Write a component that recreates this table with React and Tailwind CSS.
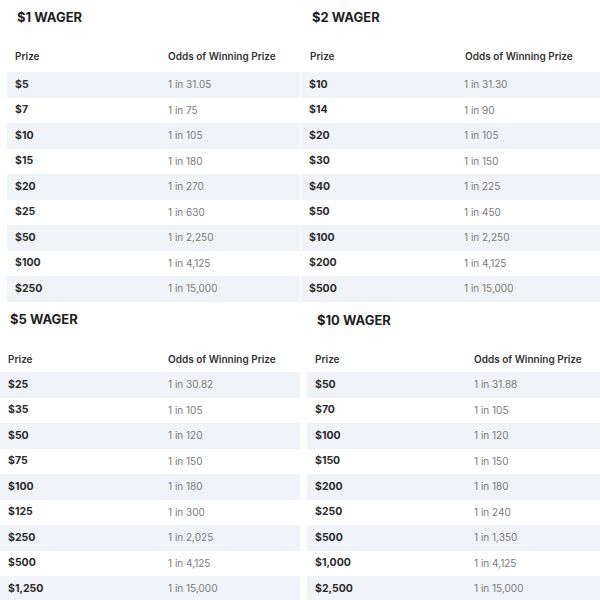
import React from "react";

const tables = [
  {
    title: "$1 WAGER",
    rows: [["$5","1 in 31.05"],["$7","1 in 75"],["$10","1 in 105"],["$15","1 in 180"],["$20","1 in 270"],["$25","1 in 630"],["$50","1 in 2,250"],["$100","1 in 4,125"],["$250","1 in 15,000"]],
  },
  {
    title: "$2 WAGER",
    rows: [["$10","1 in 31.30"],["$14","1 in 90"],["$20","1 in 105"],["$30","1 in 150"],["$40","1 in 225"],["$50","1 in 450"],["$100","1 in 2,250"],["$200","1 in 4,125"],["$500","1 in 15,000"]],
  },
  {
    title: "$5 WAGER",
    rows: [["$25","1 in 30.82"],["$35","1 in 105"],["$50","1 in 120"],["$75","1 in 150"],["$100","1 in 180"],["$125","1 in 300"],["$250","1 in 2,025"],["$500","1 in 4,125"],["$1,250","1 in 15,000"]],
  },
  {
    title: "$10 WAGER",
    rows: [["$50","1 in 31.88"],["$70","1 in 105"],["$100","1 in 120"],["$150","1 in 150"],["$200","1 in 180"],["$250","1 in 240"],["$500","1 in 1,350"],["$1,000","1 in 4,125"],["$2,500","1 in 15,000"]],
  },
];

function Table({ t, outer, titleCls, headCls, oddsCol }) {
  return (
    <div className={outer}>
      <div className={titleCls}>{t.title}</div>
      <div className={headCls}>
        <div className={oddsCol}>Prize</div>
        <div>Odds of Winning Prize</div>
      </div>
      <div className="flex flex-col">
        {t.rows.map((r, i) => (
          <div key={i} className={"flex items-center h-[25.5px] pl-2 " + (i % 2 === 0 ? "bg-[#f0f3f8]" : "bg-white")}>
            <div className={oddsCol + " font-bold text-[10.5px] text-[#2a2a2a]"}>{r[0]}</div>
            <div className="text-[10px] text-[#7a7a7a]">{r[1]}</div>
          </div>
        ))}
      </div>
    </div>
  );
}

export default function App() {
  return (
    <div className="w-[600px] h-[600px] overflow-hidden bg-white" style={{ fontFamily: "Inter, 'Noto Sans', sans-serif" }}>
      <div className="flex h-[302px]">
        <Table
          t={tables[0]}
          outer="w-[300px] pl-[7px] flex flex-col"
          titleCls="pl-[10px] pt-[9px] h-[40px] text-[13px] font-bold text-[#1f1f1f] leading-[16px]"
          headCls="flex items-center h-[32px] pl-2 text-[10px] font-semibold text-[#333]"
          oddsCol="w-[153px]"
        />
        <Table
          t={tables[1]}
          outer="w-[300px] pl-[1px] flex flex-col"
          titleCls="pl-[11px] pt-[9px] h-[40px] text-[13px] font-bold text-[#1f1f1f] leading-[16px]"
          headCls="flex items-center h-[32px] pl-[9px] text-[10px] font-semibold text-[#333]"
          oddsCol="w-[155px]"
        />
      </div>
      <div className="flex">
        <Table
          t={tables[2]}
          outer="w-[300px] flex flex-col"
          titleCls="pl-[10px] pt-[9px] h-[44px] text-[13px] font-bold text-[#1f1f1f] leading-[16px]"
          headCls="flex items-center h-[26px] pl-2 text-[10px] font-semibold text-[#333]"
          oddsCol="w-[160px]"
        />
        <Table
          t={tables[3]}
          outer="w-[293px] ml-[7px] flex flex-col"
          titleCls="pl-[10px] pt-[10px] h-[44px] text-[13px] font-bold text-[#1f1f1f] leading-[16px]"
          headCls="flex items-center h-[26px] pl-2 text-[10px] font-semibold text-[#333]"
          oddsCol="w-[159px]"
        />
      </div>
    </div>
  );
}
